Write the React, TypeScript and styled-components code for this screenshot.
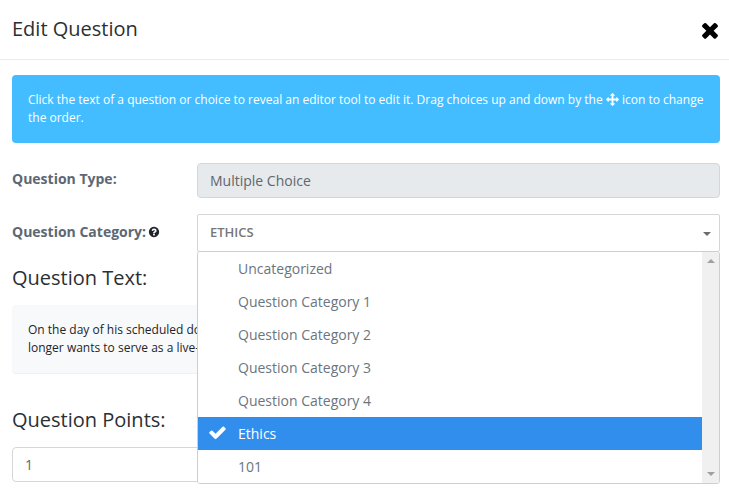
import { useState } from "react";
import type { ReactNode } from "react";
import styled, { createGlobalStyle, css } from "styled-components";

const GlobalStyle = createGlobalStyle`
  *, *::before, *::after { box-sizing: border-box; }
  body {
    margin: 0;
    background: #fff;
    color: #212529;
    font-family: "Open Sans", "Noto Sans", sans-serif;
    font-size: 14px;
    line-height: 20px;
  }
  button, input, select { font: inherit; color: inherit; margin: 0; }
`;

const Header = styled.header`
  display: flex;
  align-items: center;
  justify-content: space-between;
  height: 60px;
  padding: 0 7px 0 12px;
  border-bottom: 1px solid #e9ecef;
`;

const heading = css`
  margin: 0;
  font-size: 20px;
  line-height: 24px;
  font-weight: 400;
  color: #2b2f33;
`;

const Title = styled.h1`
  ${heading}
  padding-bottom: 2px;
`;

const SectionTitle = styled.h2`
  ${heading}
`;

const CloseButton = styled.button`
  display: flex;
  padding: 0;
  border: 0;
  background: none;
  color: #000;
  cursor: pointer;
`;

const Body = styled.main`
  padding: 15px 9px 4px 12px;
`;

const Alert = styled.p`
  margin: 0 0 20px;
  padding: 16px;
  border-radius: 4px;
  background: #43bdff;
  color: #fff;
  font-size: 12px;
  line-height: 18px;
  font-weight: 500;
`;

const FormRow = styled.div`
  display: grid;
  grid-template-columns: 185px 1fr;
  align-items: center;
  margin-bottom: 16px;

  &:nth-of-type(2) {
    margin-bottom: 14px;
  }
`;

const LabelCell = styled.div`
  display: flex;
  align-items: center;
  gap: 2px;
  padding-bottom: 3px;
`;

const Label = styled.label`
  font-weight: 700;
  color: #5c6873;
`;

const control = css`
  display: block;
  width: 100%;
  height: 35px;
  padding: 0 12px;
  border: 1px solid #d4d7da;
  border-radius: 4px;
  background: #fff;
  color: #5c6873;
  outline: none;
`;

const TextInput = styled.input`
  ${control}
  &:read-only {
    background: #e6eaed;
    color: #60666c;
  }
`;

const SelectWrap = styled.div`
  position: relative;
`;

const Select = styled.select`
  ${control}
  height: 38px;
  padding-bottom: 2px;
  border-radius: 2px;
  appearance: none;
  color: #777;
  font-size: 13px;
  font-weight: 600;
  text-transform: uppercase;
`;

const Caret = styled.span`
  position: absolute;
  top: 18px;
  right: 9px;
  border: 4px solid transparent;
  border-top-color: #6c6c6c;
  border-bottom: 0;
  pointer-events: none;
`;

const Menu = styled.div`
  position: absolute;
  z-index: 2;
  top: 100%;
  left: 0;
  right: 0;
  display: flex;
  margin-top: -1px;
  border: 1px solid #ccced0;
  border-radius: 3px;
  background: #fff;
  overflow: hidden;
`;

const OptionList = styled.ul`
  flex: 1;
  margin: 0;
  padding: 0;
  list-style: none;
`;

const OptionButton = styled.button<{ $active: boolean }>`
  display: grid;
  grid-template-columns: 30px 1fr;
  align-items: center;
  width: 100%;
  height: 33px;
  padding: 0 10px;
  border: 0;
  background: ${(p) => (p.$active ? "#328eed" : "#fff")};
  color: ${(p) => (p.$active ? "#fff" : "#6b7580")};
  font-weight: ${(p) => (p.$active ? 500 : 400)};
  text-align: left;
  cursor: pointer;
`;

const ScrollTrack = styled.div`
  display: flex;
  flex-direction: column;
  justify-content: space-between;
  align-items: center;
  width: 17px;
  padding: 7px 0;
  background: #f0f0f0;
`;

const ScrollArrow = styled.span<{ $up?: boolean }>`
  border: 4px solid transparent;
  ${(p) =>
    p.$up
      ? "border-top: 0; border-bottom-color: #a0a0a0;"
      : "border-bottom: 0; border-top-color: #a0a0a0;"}
`;

const Passage = styled.div`
  margin: 15px 0 34px;
  padding: 16px;
  border-radius: 4px;
  border-bottom: 1px solid #eff1f3;
  background: #f8f9fb;
  color: #212529;
  font-size: 12px;
  line-height: 18px;
`;

const Points = styled.div`
  margin-top: 15px;
`;

const Glyph = styled.svg<{ $size: number }>`
  width: ${(p) => p.$size}px;
  height: ${(p) => p.$size}px;
  flex: none;
  fill: currentColor;
  vertical-align: -2px;
`;

function Icon({ size, children }: { size: number; children: ReactNode }) {
  return (
    <Glyph $size={size} viewBox="0 0 1792 1792" aria-hidden="true">
      {children}
    </Glyph>
  );
}

const CloseIcon = () => (
  <Icon size={24}>
    <path d="M1490 1322q0 40-28 68l-136 136q-28 28-68 28t-68-28l-294-294-294 294q-28 28-68 28t-68-28l-136-136q-28-28-28-68t28-68l294-294-294-294q-28-28-28-68t28-68l136-136q28-28 68-28t68 28l294 294 294-294q28-28 68-28t68 28l136 136q28 28 28 68t-28 68l-294 294 294 294q28 28 28 68z" />
  </Icon>
);

const CheckIcon = () => (
  <Icon size={19}>
    <path d="M1671 566q0 40-28 68l-724 724-136 136q-28 28-68 28t-68-28l-136-136-362-362q-28-28-28-68t28-68l136-136q28-28 68-28t68 28l294 295 656-657q28-28 68-28t68 28l136 136q28 28 28 68z" />
  </Icon>
);

const MoveIcon = () => (
  <Icon size={13}>
    <path d="M1792 896q0 26-19 45l-256 256q-19 19-45 19t-45-19-19-45v-128h-384v384h128q26 0 45 19t19 45-19 45l-256 256q-19 19-45 19t-45-19l-256-256q-19-19-19-45t19-45 45-19h128v-384h-384v128q0 26-19 45t-45 19-45-19l-256-256q-19-19-19-45t19-45l256-256q19-19 45-19t45 19 19 45v128h384v-384h-128q-26 0-45-19t-19-45 19-45l256-256q19-19 45-19t45 19l256 256q19 19 19 45t-19 45-45 19h-128v384h384v-128q0-26 19-45t45-19 45 19l256 256q19 19 19 45z" />
  </Icon>
);

const HelpIcon = () => (
  <Icon size={12}>
    <path d="M1024 1376v-192q0-14-9-23t-23-9h-192q-14 0-23 9t-9 23v192q0 14 9 23t23 9h192q14 0 23-9t9-23zm256-672q0-88-55.5-163t-138.5-116-170-41q-243 0-371 213-15 24 8 42l132 100q7 6 19 6 16 0 25-12 53-68 86-92 34-24 86-24 48 0 85.5 26t37.5 59q0 38-20 61t-68 45q-63 28-115.5 86.5t-52.5 125.5v36q0 14 9 23t23 9h192q14 0 23-9t9-23q0-19 21.5-49.5t54.5-49.5q32-18 49-28.5t46-35 44.5-48 28-60.5 12.5-81zm384 192q0 209-103 385.5t-279.5 279.5-385.5 103-385.5-103-279.5-279.5-103-385.5 103-385.5 279.5-279.5 385.5-103 385.5 103 279.5 279.5 103 385.5z" />
  </Icon>
);

const categories = [
  "Uncategorized",
  "Question Category 1",
  "Question Category 2",
  "Question Category 3",
  "Question Category 4",
  "Ethics",
  "101",
];

export default function App() {
  const [category, setCategory] = useState("Ethics");
  const [points, setPoints] = useState("1");

  return (
    <>
      <GlobalStyle />
      <Header>
        <Title>Edit Question</Title>
        <CloseButton type="button" aria-label="Close">
          <CloseIcon />
        </CloseButton>
      </Header>
      <Body>
        <Alert>
          Click the text of a question or choice to reveal an editor tool to edit it. Drag choices up
          and down by the <MoveIcon /> icon to change the order.
        </Alert>
        <FormRow>
          <LabelCell>
            <Label htmlFor="type">Question Type:</Label>
          </LabelCell>
          <TextInput id="type" value="Multiple Choice" readOnly />
        </FormRow>
        <FormRow>
          <LabelCell>
            <Label htmlFor="category">Question Category:</Label>
            <HelpIcon />
          </LabelCell>
          <SelectWrap>
            <Select id="category" value={category} onChange={(e) => setCategory(e.target.value)}>
              {categories.map((name) => (
                <option key={name}>{name}</option>
              ))}
            </Select>
            <Caret />
            <Menu>
              <OptionList>
                {categories.map((name) => (
                  <li key={name}>
                    <OptionButton
                      type="button"
                      $active={name === category}
                      aria-pressed={name === category}
                      onClick={() => setCategory(name)}
                    >
                      <span>{name === category && <CheckIcon />}</span>
                      {name}
                    </OptionButton>
                  </li>
                ))}
              </OptionList>
              <ScrollTrack>
                <ScrollArrow $up />
                <ScrollArrow />
              </ScrollTrack>
            </Menu>
          </SelectWrap>
        </FormRow>
        <SectionTitle>Question Text:</SectionTitle>
        <Passage>
          On the day of his scheduled do
          <br />
          longer wants to serve as a live-
        </Passage>
        <SectionTitle as="label" htmlFor="points">
          Question Points:
        </SectionTitle>
        <Points>
          <TextInput id="points" value={points} onChange={(e) => setPoints(e.target.value)} />
        </Points>
      </Body>
    </>
  );
}
